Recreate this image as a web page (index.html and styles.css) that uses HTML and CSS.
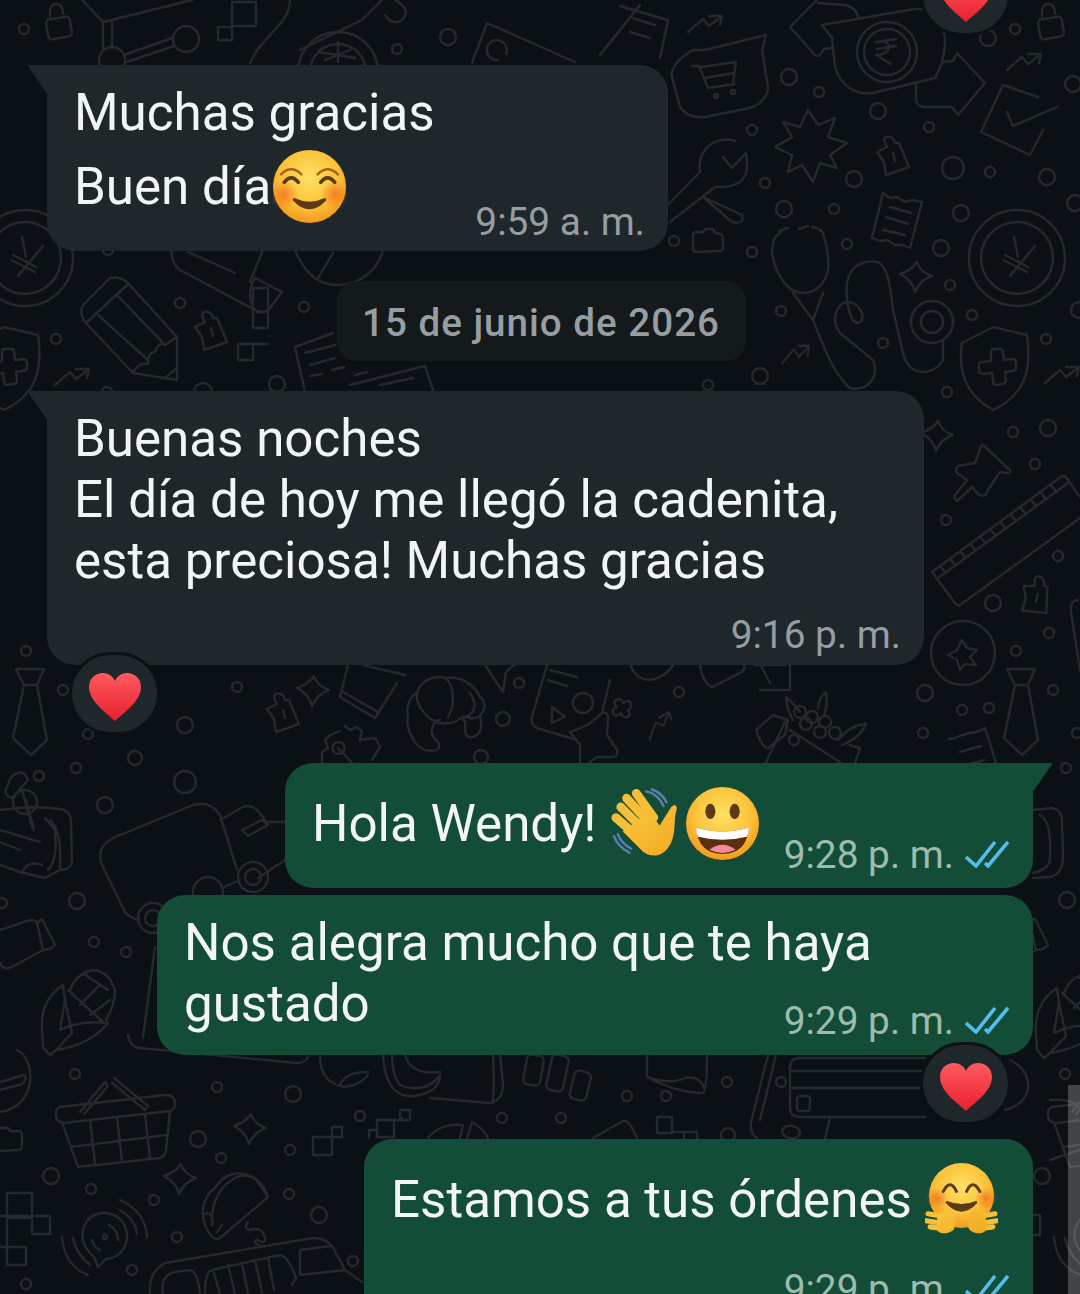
FILE: index.html
```html
<!DOCTYPE html>
<html lang="es">
<head>
    <meta charset="UTF-8">
    <title>Chat</title>
    <link rel="stylesheet" href="styles.css">
</head>
<body>
    <svg class="wallpaper" xmlns="http://www.w3.org/2000/svg" viewBox="0 0 1080 1294" width="1080" height="1294">
        <defs>
            <radialGradient id="face" cx="50%" cy="38%" r="62%">
                <stop offset="0" stop-color="#fde163"/>
                <stop offset="0.6" stop-color="#fcc43c"/>
                <stop offset="1" stop-color="#f59a1d"/>
            </radialGradient>
            <linearGradient id="red" x1="0" y1="0" x2="0" y2="1">
                <stop offset="0" stop-color="#ff5a5f"/>
                <stop offset="1" stop-color="#e8202c"/>
            </linearGradient>
            <linearGradient id="palm" x1="0" y1="0" x2="1" y2="1">
                <stop offset="0" stop-color="#f9c83f"/>
                <stop offset="1" stop-color="#f3a921"/>
            </linearGradient>
            <radialGradient id="blush">
                <stop offset="0" stop-color="#f2691c" stop-opacity="0.75"/>
                <stop offset="1" stop-color="#f2691c" stop-opacity="0"/>
            </radialGradient>
            <symbol id="heart" viewBox="0 0 54 50">
                <path d="M27 49 C20 42 1 30 1 15 C1 6 8 1 15 1 C20 1 25 4 27 9 C29 4 34 1 39 1 C46 1 53 6 53 15 C53 30 34 42 27 49Z" fill="url(#red)"/>
            </symbol>
            <g id="star4"><path d="M1 -14 Q4 -4 16 0 Q4 4 -1 16 Q-4 4 -16 -2 Q-4 -6 1 -14Z"/></g>
            <g id="plug"><path d="M-15 -3 L-5 -8 Q-10 -16 -6 -18 Q1 -20 3 -12 L7 -12 L17 12 L-6 20 L-8 7Z M1 -2 L3 6"/></g>
            <g id="trend"><path d="M0 15 L15 2 L21 9 L33 0 M21 -1 L34 -1 L32 8"/></g>
            <g id="tie"><path d="M1007 669 L1035 669 L1028 685 L1038 740 L1022 755 L1004 738 L1015 685Z M1015 685 L1028 685"/></g>
            <g id="shield"><path d="M962 343 L993 327 L1027 335 C1032 370 1025 395 993 410 C965 395 958 370 962 343Z M991 352 Q991 349 994 349 L1000 349 Q1003 349 1003 352 L1004 360 L1012 359 Q1016 359 1016 363 L1016 368 Q1016 371 1012 371 L1005 372 L1006 380 Q1006 384 1002 384 L997 385 Q993 385 993 381 L992 373 L984 374 Q979 374 979 370 L979 366 Q979 362 983 362 L991 361Z"/></g>
            <g id="yen"><circle cx="1017" cy="258" r="48"/><circle cx="1017" cy="258" r="36"/><path d="M1035 246 L1010 276 M1014 237 L1018 257 M1005 255 L1028 267 M1003 260 L1027 272"/></g>
            <g id="lock"><rect x="47" y="18" width="24" height="20" rx="4" transform="rotate(-10 59 28)"/><path d="M50 17 Q49 4 56 4 Q63 4 63 14"/></g>
            <g id="basket"><path d="M60 1107 L165 1095 Q175 1095 175 1103 Q175 1110 170 1111 L64 1123 Q55 1122 56 1114 Q56 1108 60 1107Z M63 1125 L78 1167 L160 1158 Q165 1157 166 1150 L170 1112 M90 1120 L95 1164 M117 1117 L122 1161 M145 1114 L150 1158 M71 1147 L167 1135 M80 1112 L105 1082 L108 1086 L84 1114 M114 1078 L148 1106 L145 1110 L112 1083"/></g>
            <g id="corn"><path d="M43 1047 L50 1055 L56 1050 Q90 1045 108 1023 Q80 1020 60 1030 L65 1000 L63 985 Q40 1000 42 1030 L43 1047 M56 1050 L72 1033 L65 1000 M70 990 Q75 975 92 970 Q108 970 115 990 Q115 1005 106 1020 M68 990 L103 1022 M84 974 L108 990 M80 1005 L100 985 M90 1015 L110 1000"/></g>
            <g id="bottle"><path d="M0 930 L30 920 Q36 920 37 923 L43 950 L10 968 Q2 970 0 962 M37 923 L42 919 L55 945 L50 949 L43 950"/></g>
            <g id="dial"><path d="M105 1213 C85 1213 81 1230 83 1240 C86 1252 92 1254 94 1257 L98 1267 L106 1259 C120 1258 128 1246 127 1234 C125 1222 118 1214 105 1213Z M109 1225 Q118 1230 118 1240 M92 1240 Q94 1247 100 1250 M62 1237 Q64 1265 88 1275 M73 1238 Q76 1254 90 1265 M120 1200 Q146 1212 147 1237 M120 1210 Q136 1220 137 1234"/><circle cx="105" cy="1237" r="2"/></g>
        </defs>
        <g class="doodle">
            <!-- small circles -->
            <circle cx="24" cy="29" r="5"/><circle cx="448" cy="37" r="8"/><circle cx="397" cy="49" r="5"/><circle cx="789" cy="77" r="8"/><circle cx="819" cy="92" r="5"/><circle cx="878" cy="111" r="8"/><circle cx="929" cy="127" r="5"/><circle cx="752" cy="130" r="5"/><circle cx="953" cy="168" r="11"/><circle cx="990" cy="172" r="5"/><circle cx="1047" cy="177" r="8"/><circle cx="854" cy="179" r="8"/><circle cx="765" cy="183" r="5"/><circle cx="784" cy="209" r="8"/><circle cx="834" cy="209" r="5"/><circle cx="961" cy="213" r="8"/><circle cx="674" cy="241" r="5"/><circle cx="752" cy="252" r="5"/><circle cx="847" cy="244" r="5"/><circle cx="941" cy="248" r="8"/><circle cx="950" cy="285" r="5"/><circle cx="972" cy="315" r="5"/><circle cx="781" cy="311" r="5"/><circle cx="883" cy="343" r="5"/><circle cx="1046" cy="339" r="5"/><circle cx="760" cy="376" r="8"/><circle cx="708" cy="385" r="5"/><circle cx="947" cy="392" r="5"/><circle cx="1015" cy="29" r="5"/><circle cx="1073" cy="84" r="8"/><circle cx="988" cy="38" r="8"/><circle cx="1075" cy="203" r="8"/><circle cx="1079" cy="310" r="8"/>
            <circle cx="180" cy="303" r="5"/><circle cx="56" cy="339" r="5"/><circle cx="304" cy="307" r="5"/><circle cx="277" cy="384" r="8"/><circle cx="203" cy="392" r="9"/><circle cx="108" cy="250" r="5"/><circle cx="107" cy="392" r="5"/>
            <circle cx="1048" cy="428" r="8"/><circle cx="1013" cy="432" r="5"/><circle cx="1035" cy="464" r="5"/><circle cx="946" cy="520" r="5"/><circle cx="1058" cy="556" r="5"/><circle cx="993" cy="603" r="8"/><circle cx="1049" cy="633" r="5"/><circle cx="1016" cy="651" r="5"/><circle cx="925" cy="693" r="8"/><circle cx="962" cy="710" r="5"/><circle cx="989" cy="708" r="5"/><circle cx="1053" cy="690" r="5"/><circle cx="923" cy="733" r="5"/><circle cx="1077" cy="733" r="5"/>
            <circle cx="26" cy="651" r="5"/><circle cx="63" cy="690" r="5"/><circle cx="88" cy="734" r="5"/><circle cx="185" cy="725" r="8"/><circle cx="237" cy="687" r="5"/><circle cx="76" cy="768" r="5"/><circle cx="39" cy="776" r="5"/><circle cx="185" cy="782" r="11"/><circle cx="105" cy="805" r="8"/><circle cx="135" cy="758" r="7"/>
            <circle cx="519" cy="683" r="5"/><circle cx="503" cy="719" r="7"/><circle cx="679" cy="692" r="5"/><circle cx="794" cy="740" r="5"/><circle cx="481" cy="757" r="7"/>
            <circle cx="77" cy="901" r="8"/><circle cx="94" cy="942" r="5"/><circle cx="126" cy="952" r="5"/><circle cx="2" cy="903" r="5"/>
            <circle cx="75" cy="1074" r="5"/><circle cx="217" cy="1087" r="5"/><circle cx="293" cy="1094" r="8"/><circle cx="360" cy="1116" r="5"/><circle cx="198" cy="1139" r="8"/><circle cx="290" cy="1150" r="5"/><circle cx="221" cy="1158" r="5"/><circle cx="51" cy="1176" r="8"/><circle cx="91" cy="1189" r="5"/><circle cx="154" cy="1200" r="5"/><circle cx="289" cy="1194" r="5"/><circle cx="319" cy="1215" r="8"/><circle cx="177" cy="1237" r="5"/><circle cx="132" cy="1270" r="5"/><circle cx="353" cy="1261" r="5"/><circle cx="26" cy="1284" r="5"/>
            <circle cx="502" cy="1118" r="5"/><circle cx="561" cy="1118" r="5"/><circle cx="627" cy="1096" r="5"/><circle cx="727" cy="1082" r="5"/><circle cx="728" cy="1135" r="7"/><circle cx="1066" cy="768" r="5"/><circle cx="1067" cy="900" r="8"/><circle cx="1065" cy="1074" r="5"/><circle cx="781" cy="1082" r="5"/><circle cx="666" cy="1096" r="5"/><circle cx="1042" cy="1176" r="8"/>

            <!-- top row -->
            <use href="#lock"/>
            <use href="#lock" x="992"/>
            <path d="M82 0 L103 22 L192 0 M103 22 L103 48 M112 22 L112 48 M124 55 L172 38 M127 62 L174 46"/>
            <circle cx="186" cy="39" r="13"/><circle cx="112" cy="60" r="13"/>
            <path d="M218 27 h14 v13 h-14Z M232 2 h24 v24 h-24Z M290 0 C290 25 262 35 250 63"/>
            <circle cx="338" cy="72" r="40"/><circle cx="338" cy="72" r="28"/>
            <path d="M338 42 L338 62 M318 52 L355 58 M325 60 L350 50 M300 50 L362 20 L382 0 M385 15 Q392 26 402 20 Q412 10 395 0"/>
            <path d="M472 63 L487 23 L548 50 L575 62 M498 60 a10 10 0 1 1 8 -6"/>
            <path d="M620 6 L668 20 L660 58 M632 18 L655 25 M630 32 L650 38 M600 55 L640 5"/>
            <use href="#trend" x="688" y="17"/>
            <path d="M766 35 L705 50 L693 50 C678 58 670 70 672 77 L680 107 C685 115 695 118 705 117 L750 108 C762 104 768 95 768 87 L762 50 Z M692 66 L699 66 L708 88 L735 84 M701 67 L736 62 L733 84 M705 78 L734 73"/>
            <circle cx="716" cy="96" r="2"/><circle cx="733" cy="92" r="2"/>
            <path d="M817 0 L790 27 L815 55 Q820 58 822 52 L824 49 L833 48 M818 3 L845 5 Q857 8 858 17"/>
            <path d="M822 25 L915 9 Q935 8 941 20 C948 40 945 60 935 78 L873 93 C860 95 842 90 835 67 L832 38Z"/>
            <circle cx="887" cy="52" r="30"/><circle cx="887" cy="52" r="23"/>
            <path d="M876 42 L896 39 M877 49 L896 46 M882 41 C892 42 892 54 876 55 L891 64"/>
            <path d="M943 62 L953 61 L957 53 L985 83 L958 115 L952 107 L923 107 Q916 105 916 100 L916 85"/>
            <use href="#trend" x="1007" y="55"/>
            <path d="M1038 97 L1003 85 L981 132 L1030 155 L1043 130 M1007 112 L1013 126 L1057 107"/>
            <path d="M808 110 L818 125 L835 118 L828 137 L847 143 L830 155 L837 168 L820 163 L813 182 L802 165 L788 172 L792 155 L775 147 L792 137 L783 122 L800 127Z"/>
            <use href="#plug" x="892" y="155"/>
            <path d="M735 141 C715 135 697 150 700 172 L668 205 M723 157 L732 168 L746 153 C750 175 745 188 715 187 L670 222 M703 197 L742 215 Q745 225 732 222 L703 197"/>
            <path d="M696 232 L703 232 L705 229 L713 229 L715 233 L720 234 Q723 234 723 240 L723 248 Q723 251 720 251 L696 252 Q693 252 693 249 L693 236 Q693 232 696 232Z"/>
            <path d="M883 193 L890 198 L897 197 L905 202 L912 200 L922 202 L910 248 L902 245 L895 245 L887 240 L880 241 L872 238Z M890 207 L911 213 M886 217 L908 224 M883 230 L905 235"/>
            <path d="M780 233 Q772 237 772 253 C777 280 790 293 803 293 C815 293 825 285 828 270 C830 258 825 240 823 233 Q820 228 812 227"/>
            <path d="M779 231 L788 228 M799 229 L808 226 M793 293 L813 320 L823 293 M813 320 C825 350 833 373 850 388 C867 392 880 377 873 360 L840 333 C830 320 837 302 848 302 C860 302 868 320 858 323 C850 323 845 300 847 283 C850 263 867 260 877 262 C887 265 890 283 893 310 L903 353 C908 377 933 377 943 360 L943 340"/>
            <circle cx="932" cy="322" r="21"/><circle cx="932" cy="322" r="11"/>
            <use href="#star4" x="916" y="276"/>
            <use href="#yen"/>
            <use href="#yen" x="-992"/>
            <use href="#shield"/>
            <use href="#shield" x="-989"/>
            <use href="#trend" transform="translate(782 347) scale(0.8 1.1)"/>
            <use href="#trend" x="1045" y="368"/>
            <use href="#trend" x="55" y="370"/>

            <!-- date row, left side -->
            <path d="M110 278 Q120 276 128 283 L177 337 L177 380 L133 373 L85 322 Q78 312 84 304Z M87 322 L127 285 M98 315 L148 360 M117 295 L165 345 M133 372 Q140 362 148 364 Q148 352 155 352 Q160 340 165 345 L177 337 M165 378 L177 368"/>
            <path d="M172 251 Q170 262 180 270 L255 310 Q265 315 270 308 L282 292 L255 278 Q245 295 255 310 M188 252 L235 273 M263 250 L250 282"/>
            <path d="M295 250 C305 275 320 285 337 285 C360 285 378 270 383 250 M333 253 L318 278"/>
            <use href="#plug" x="210" y="330"/>
            <path d="M253 328 h15 v-16 h-11 M253 328 v-40 h15 v40 M238 360 h15 v-16 h-15Z M253 344 L268 344"/>
            <path d="M295 347 L333 333 M295 347 L305 392 M305 353 L335 345 M310 365 L335 358 M350 385 L425 366 L433 390 M380 385 L413 378 M310 376 L322 374 M332 370 L344 367 M355 375 L367 372"/>

            <!-- right edge -->
            <use href="#star4" x="937" y="435"/>
            <path d="M983 445 L1010 470 Q1011 474 1007 473 L1000 472 L988 490 Q985 499 978 494 L972 487 L957 501 Q953 498 955 495 L967 480 L960 475 Q953 472 958 466 L975 463 L980 450 Q980 445 983 445Z"/>
            <path d="M932 572 L1062 476 Q1066 476 1068 480 L1080 497 M1080 518 L960 605 Q957 606 955 603 L932 572 M938 578 L1068 483 M945 572 L941 567 M955 565 L951 560 M965 557 L961 552 M975 550 L971 545 M985 543 L981 538 M995 535 L991 530 M1005 528 L1001 523 M1015 520 L1011 515 M1025 513 L1021 508 M1035 505 L1031 500 M1045 498 L1041 493 M1055 490 L1051 485"/>
            <use href="#plug" transform="translate(1036 595) rotate(25)"/>
            <circle cx="963" cy="653" r="32"/>
            <path d="M962 640 L967 648 L977 650 L970 657 L976 665 L965 664 L960 670 L957 660 L948 655 L957 650Z"/>
            <use href="#tie"/>
            <use href="#tie" x="-991"/>
            <path d="M1078 600 Q1070 600 1071 612 L1080 670"/>
            <path d="M949 739 L955 738 L962 735 L970 733 L977 732 L985 728 L996 763 M960 752 L981 746 M964 766 L984 760"/>

            <!-- row under second bubble -->
            <use href="#plug" x="282" y="712"/>
            <use href="#star4" x="313" y="690"/>
            <path d="M348 665 L340 697 L375 718 L397 683 M343 692 L378 712 M363 665 L405 675"/>
            <path d="M345 726 L350 730 L357 727 L362 732 L360 740 L375 738 L380 747 L372 760 M322 763 L322 752 L328 748 L325 740 L330 735 L340 731"/>
            <path d="M338 748 L352 763 M334 752 a6 6 0 1 0 9 -8 a6 6 0 1 0 -9 8"/>
            <path d="M417 693 C420 680 435 675 445 678 C460 675 475 685 480 697 C490 705 482 720 470 718 C465 715 460 718 458 720 C455 723 440 725 435 722 C430 730 430 735 438 742 C442 750 435 752 425 750 C412 745 405 725 408 715 C405 705 412 695 417 693 M417 693 C415 705 430 725 440 720 M445 678 C455 685 455 705 448 717 M470 693 C478 705 475 715 462 718 M462 718 C470 722 460 735 470 737 C480 737 483 730 480 715"/>
            <path d="M485 665 L503 692 L506 672 L520 660 M547 665 L532 717 Q530 726 540 729 L577 740 M610 680 L602 713 M550 670 L577 677 M548 680 L567 686"/>
            <path d="M552 707 L565 717 L552 723Z"/>
            <circle cx="583" cy="703" r="10"/>
            <path d="M570 732 L588 725 L602 713 Q608 712 608 717 L607 735 L617 750 Q618 757 613 757 L597 757 L590 762 M580 763 L580 745 L570 732"/>
            <path d="M616 700 Q622 697 623 703 Q630 698 631 705 Q632 708 628 710 Q632 715 627 717 Q622 718 621 713 Q615 718 613 713 Q612 708 617 707 Q612 702 616 700Z"/>
            <path d="M630 663 C635 685 660 685 673 665 M700 666 Q703 683 712 687 L740 673 Q748 668 742 660"/>
            <use href="#trend" transform="translate(643 728) rotate(-30) scale(0.9)"/>
            <path d="M756 730 L773 715 L788 720 L785 735 L768 748 Q762 748 756 730Z M785 722 L760 775 M790 730 L860 775 M850 745 L860 748 L855 763"/>
            <circle cx="800" cy="712" r="6"/><circle cx="812" cy="717" r="6"/><circle cx="825" cy="722" r="6"/><circle cx="806" cy="724" r="6"/><circle cx="820" cy="732" r="6"/><circle cx="835" cy="733" r="6"/>
            <path d="M793 720 Q786 708 786 697 Q795 705 800 712 M818 708 Q820 695 826 692 Q828 705 824 716 M838 740 Q850 725 866 724 Q860 738 842 745"/>
            <path d="M758 660 L770 683 M755 665 L785 665 M760 690 L790 690 L790 662"/>

            <!-- left middle -->
            <path d="M0 810 Q30 805 60 809 Q70 810 71 820 L72 862 Q70 870 60 870 L45 878 L20 872 L0 865 M45 818 L55 830 Q58 860 48 870 M0 830 L40 842 M0 842 L20 850 M50 820 Q62 830 60 868 M22 872 Q28 860 42 865"/>
            <path d="M12 798 L28 780 Q24 770 18 773 Q10 775 8 785 Q2 795 12 798 M22 790 L32 827 M26 800 L34 830"/>
            <circle cx="25" cy="802" r="12"/>
            <path d="M193 805 L113 838 Q95 848 102 865 L125 912 Q130 918 139 920 M193 805 Q210 800 220 815 L237 870 M220 820 L243 807 Q255 802 266 822 L285 822 M242 830 L262 820 L268 825 L248 836Z M258 878 L285 860 M222 888 L240 880"/>
            <circle cx="253" cy="877" r="15"/><circle cx="253" cy="877" r="8"/><circle cx="208" cy="892" r="15"/><circle cx="153" cy="918" r="15"/><circle cx="153" cy="918" r="8"/>
            <use href="#bottle"/>
            <use href="#bottle" x="993"/>
            <use href="#corn"/>
            <use href="#corn" transform="translate(994 3)"/>
            <path d="M155 947 L143 1037 M128 1035 Q130 1047 140 1048 L297 1063 Q305 1063 308 1057"/>
            <path d="M1033 810 L1052 808 Q1062 810 1062 820 L1063 858 Q1062 875 1050 877 L1033 878 M1040 815 Q1052 820 1050 860 Q1048 870 1033 873"/>

            <!-- bottom row -->
            <path d="M0 1112 C37 1107 37 1060 17 1050 M0 1090 L22 1084 Q28 1078 24 1075 L0 1082"/>
            <path d="M0 1128 h8 l2 3 h8 q4 0 4 5 v10 q0 4 -4 4 l-18 1"/>
            <use href="#basket"/>
            <use href="#basket" x="992"/>
            <use href="#star4" x="250" y="1128"/>
            <use href="#star4" x="180" y="1178"/>
            <path d="M7 1193 h25 v25 h-25Z M32 1216 h18 v18 h-18Z M0 1216 h32 M7 1218 v29 M7 1247 h19 v18 h-19Z M0 1247 h7"/>
            <use href="#dial"/>
            <use href="#dial" x="992"/>
            <path d="M313 1137 h19 v18 h-19Z M332 1127 h10 v10 h-10Z"/>
            <path d="M212 1237 C195 1215 205 1195 215 1188 C225 1172 240 1170 255 1178 L268 1197 L220 1238 Q215 1240 212 1237Z M268 1197 C262 1178 245 1170 232 1180 C222 1185 212 1200 212 1220 M204 1215 C208 1210 214 1215 212 1225 M217 1232 L222 1225"/>
            <path d="M248 1222 Q243 1228 250 1230 Q262 1226 265 1238 Q266 1245 258 1240 Q252 1240 258 1245 L262 1246"/>
            <path d="M150 1294 Q148 1272 165 1263 L313 1238 Q325 1238 332 1246 L345 1270 L362 1282 M163 1294 Q160 1275 175 1272 L190 1270 Q198 1272 200 1294 M205 1294 Q205 1272 212 1270 L280 1255 Q288 1256 296 1278 L292 1285 M213 1270 L220 1294 M228 1265 L235 1294 M242 1263 L248 1294 M255 1260 L262 1292 M268 1258 L274 1290 M300 1250 L330 1246 M300 1250 L300 1275 L345 1270"/>
            <path d="M320 1057 C320 1075 330 1085 345 1087 Q360 1085 368 1075 M340 1085 Q345 1072 368 1072"/>
            <path d="M383 1055 C385 1090 400 1100 420 1095 Q440 1090 440 1075 Q425 1095 400 1085 Q392 1075 392 1055 M405 1055 Q410 1075 440 1072 M430 1098 L490 1103 Q503 1100 503 1085 L500 1055 M492 1103 Q495 1095 493 1055"/>
            <rect x="525" y="1055" width="17" height="30" rx="5" transform="rotate(10 533 1070)"/>
            <rect x="549" y="1055" width="17" height="36" rx="5" transform="rotate(12 557 1073)"/>
            <rect x="572" y="1071" width="17" height="29" rx="5" transform="rotate(14 580 1085)"/>
            <path d="M647 1055 L647 1077 Q677 1093 703 1093 Q707 1090 707 1055 M647 1077 Q670 1085 685 1078 Q700 1075 704 1088"/>
            <path d="M768 1055 L751 1122 Q750 1135 757 1138 M776 1055 L760 1120"/>
            <path d="M925 1058 L800 1058 Q790 1058 790 1068 L790 1108 Q790 1117 800 1117 L925 1117 M790 1071 L922 1071 M790 1088 L922 1088 M830 1118 L825 1138"/>
            <rect x="797" y="1096" width="13" height="15" rx="3"/>
            <ellipse cx="791" cy="1132" rx="9" ry="6" transform="rotate(8 791 1132)"/>
            <path d="M657 1117 h15 v16 h-15Z M672 1132 h25 v8 M684 1132 v8"/>
            <path d="M593 1138 L623 1121 Q628 1120 632 1128 L637 1138 M428 1138 Q440 1123 463 1125 L460 1138 M467 1138 L472 1122 Q483 1128 488 1138"/>
            <path d="M377 1120 h17 v17 h-17Z M400 1110 h10 v10 h-10Z M394 1120 h8 v-2 M369 1138 v-8 h8"/>
            <path d="M1050 1100 Q1072 1098 1080 1108 M1050 1160 L1080 1150"/>
            <path d="M1033 1215 h7 v20 h-7"/>
            <path d="M1010 1060 Q1030 1070 1028 1090 Q1024 1105 1005 1110"/>
        </g>
    </svg>

    <div class="scrollbar"></div>

    <main class="chat">
        <div class="reaction reaction-top">
            <svg class="heart"><use href="#heart"/></svg>
        </div>

        <div class="msg msg-in msg-thanks">
            <div class="line">Muchas gracias</div>
            <div class="line line-next">Buen día
                <svg class="emoji emoji-tight" viewBox="0 0 72 72">
                    <circle cx="36" cy="36" r="36" fill="url(#face)"/>
                    <circle cx="11" cy="44" r="14" fill="url(#blush)"/>
                    <circle cx="61" cy="44" r="14" fill="url(#blush)"/>
                    <path d="M8 24 Q18 14 28 24 M44 24 Q54 14 64 24" fill="none" stroke="#a3651c" stroke-width="2.5" stroke-linecap="round"/>
                    <path d="M11 32 Q18 23 25 32 M47 32 Q54 23 61 32" fill="none" stroke="#5c3a16" stroke-width="3.5" stroke-linecap="round"/>
                    <path d="M21 49 Q36 65 51 49 Q36 56 21 49Z" fill="#5c3a16" stroke="#5c3a16" stroke-width="3" stroke-linejoin="round"/>
                </svg>
            </div>
            <div class="meta meta-overlap-1"><span>9:59 a. m.</span></div>
        </div>

        <div class="date-row">
            <div class="date-pill">15 de junio de 2026</div>
        </div>

        <div class="msg msg-in msg-tall">
            <div class="line">Buenas noches</div>
            <div class="line">El día de hoy me llegó la cadenita,</div>
            <div class="line">esta preciosa! Muchas gracias</div>
            <div class="meta meta-below"><span>9:16 p. m.</span></div>
            <div class="reaction reaction-left">
                <svg class="heart"><use href="#heart"/></svg>
            </div>
        </div>

        <div class="msg msg-out msg-hello">
            <div class="line">Hola Wendy!
                <svg class="emoji emoji-wave" viewBox="0 0 72 72">
                    <path d="M36 3 Q48 5 54 18 M42 1 Q52 4 57 14 M3 49 Q7 60 19 66 M7 47 Q10 56 21 62" fill="none" stroke="#5b7fb5" stroke-width="2.5" stroke-linecap="round"/>
                    <path d="M5 30 L28 50 M10 19 L33 42 M16 10 L39 35 M26 5 L44 30" fill="none" stroke="#f7bf37" stroke-width="9" stroke-linecap="round"/>
                    <path d="M62 19 C66 15 69 18 67 24 C64 34 68 50 58 62 C50 72 38 70 32 64 L12 44 L40 24 L50 38 Z" fill="url(#palm)"/>
                </svg>
                <svg class="emoji emoji-grin" viewBox="0 0 72 72">
                    <circle cx="36" cy="36" r="36" fill="url(#face)"/>
                    <ellipse cx="24" cy="24" rx="5" ry="7.5" fill="#5c3a16"/>
                    <ellipse cx="48" cy="24" rx="5" ry="7.5" fill="#5c3a16"/>
                    <path d="M10 40 Q36 48 62 40 Q60 66 36 66 Q12 66 10 40Z" fill="#5c2d0e"/>
                    <path d="M10 40 Q36 48 62 40 Q62 46 60 49 Q36 55 12 49 Q10 46 10 40Z" fill="#fff"/>
                    <path d="M23 62 Q36 52 49 62 Q36 68 23 62Z" fill="#f28a9b"/>
                </svg>
            </div>
            <div class="meta meta-overlap-3">
                <span>9:28 p. m.</span>
                <svg class="ticks" viewBox="0 0 44 28"><path d="M1 17 L11 26 L30 2 M20 23 L23 26 L43 2"/></svg>
            </div>
        </div>

        <div class="msg msg-out msg-glad">
            <div class="line">Nos alegra mucho que te haya</div>
            <div class="line">gustado</div>
            <div class="meta meta-overlap-4">
                <span>9:29 p. m.</span>
                <svg class="ticks" viewBox="0 0 44 28"><path d="M1 17 L11 26 L30 2 M20 23 L23 26 L43 2"/></svg>
            </div>
            <div class="reaction reaction-right">
                <svg class="heart"><use href="#heart"/></svg>
            </div>
        </div>

        <div class="msg msg-out msg-orders">
            <div class="line">Estamos a tus órdenes
                <svg class="emoji emoji-hug" viewBox="0 0 72 72">
                    <circle cx="36" cy="32" r="32" fill="url(#face)"/>
                    <circle cx="12" cy="35" r="11" fill="url(#blush)"/>
                    <circle cx="60" cy="35" r="11" fill="url(#blush)"/>
                    <path d="M18 28 Q25 15 31 28 M41 28 Q47 15 54 28" fill="none" stroke="#5c3a16" stroke-width="3" stroke-linecap="round"/>
                    <path d="M22 39 Q36 54 50 39 Q36 45 22 39Z" fill="#5c3a16" stroke="#5c3a16" stroke-width="3" stroke-linejoin="round"/>
                    <path d="M3 50 L20 53 M1 57 L20 60 M5 63 L20 65 M69 50 L52 53 M71 57 L52 60 M67 63 L52 65" stroke="#f7bf37" stroke-width="5" stroke-linecap="round"/>
                    <path d="M23 44 C30 52 32 60 28 66 C22 71 14 70 12 66 L12 52 Z M49 44 C42 52 40 60 44 66 C50 71 58 70 60 66 L60 52 Z" fill="url(#palm)"/>
                </svg>
            </div>
            <div class="meta meta-overlap-5">
                <span>9:29 p. m.</span>
                <svg class="ticks" viewBox="0 0 44 28"><path d="M1 17 L11 26 L30 2 M20 23 L23 26 L43 2"/></svg>
            </div>
        </div>
    </main>
</body>
</html>
```

FILE: styles.css
```css
html, body {
    margin: 0;
    padding: 0;
    height: 1294px;
    overflow: hidden;
    background: #0b1014;
}

body {
    position: relative;
    width: 1080px;
    font-family: Roboto, "Liberation Sans", sans-serif;
}

.wallpaper {
    position: absolute;
    top: 0;
    left: 0;
}

.doodle {
    fill: none;
    stroke: #24292d;
    stroke-width: 2.4;
    stroke-linecap: round;
    stroke-linejoin: round;
}

.scrollbar {
    position: absolute;
    top: 1085px;
    right: 0;
    width: 12px;
    height: 209px;
    background: rgba(255, 255, 255, 0.22);
    z-index: 2;
}

.chat {
    position: relative;
    display: flex;
    flex-direction: column;
    padding-top: 65px;
}

.msg {
    position: relative;
    box-sizing: border-box;
    padding: 17px 23px 10px 27px;
    border-radius: 28px;
    color: #f2f5f5;
    font-size: 51.1px;
}

.msg::before {
    content: "";
    position: absolute;
    top: 0;
    width: 21px;
    height: 30px;
}

.msg-in {
    align-self: flex-start;
    margin-left: 47px;
    background: #1f272a;
    border-top-left-radius: 0;
}

.msg-in::before {
    left: -20px;
    background: #1f272a;
    clip-path: polygon(0 0, 100% 0, 100% 100%);
}

.msg-out {
    align-self: flex-end;
    margin-right: 47px;
    padding-right: 24px;
    background: #144d37;
}

.msg-thanks {
    width: 621px;
    height: 186px;
}

.msg-tall {
    width: 877px;
    height: 274px;
}

.msg-hello {
    width: 748px;
    height: 125px;
    margin-top: 98px;
    padding-top: 30px;
    border-top-right-radius: 0;
}

.msg-hello::before {
    right: -20px;
    background: #144d37;
    clip-path: polygon(0 0, 100% 0, 0 100%);
}

.msg-glad {
    width: 876px;
    height: 160px;
    margin-top: 7px;
}

.msg-orders {
    width: 669px;
    height: 200px;
    margin-top: 84px;
    padding-top: 30px;
}

.line {
    display: flex;
    align-items: center;
    height: 61px;
}

.line-next {
    margin-top: 13px;
}

.meta {
    display: flex;
    justify-content: flex-end;
    align-items: center;
    gap: 11px;
    height: 40px;
    color: #969ea1;
    font-size: 38.8px;
}

.msg-out .meta {
    color: #9dbcae;
}

.meta-overlap-1 {
    margin-top: -16px;
}

.meta-below {
    margin-top: 23px;
}

.meta-overlap-3 {
    margin-top: -20px;
}

.meta-overlap-4 {
    margin-top: -34px;
}

.meta-overlap-5 {
    margin-top: 38px;
}

.ticks {
    width: 44px;
    height: 28px;
    fill: none;
    stroke: #53bdeb;
    stroke-width: 3.6;
}

.emoji {
    flex: none;
    width: 73px;
    height: 73px;
}

.emoji-tight {
    margin-left: 2px;
}

.emoji-wave {
    width: 70px;
    margin-left: 14px;
}

.emoji-grin {
    margin-left: 5px;
}

.emoji-hug {
    margin-left: 13px;
}

.date-row {
    display: flex;
    justify-content: center;
    margin: 30px 0;
    padding-left: 2px;
}

.date-pill {
    box-sizing: border-box;
    width: 409px;
    height: 80px;
    padding-top: 2px;
    line-height: 80px;
    text-align: center;
    border-radius: 20px;
    background: #14191c;
    color: #979ea2;
    font-size: 38.6px;
    font-weight: 500;
    letter-spacing: 1px;
}

.reaction {
    position: absolute;
    box-sizing: border-box;
    display: flex;
    justify-content: center;
    align-items: center;
    width: 91px;
    height: 83px;
    padding-top: 6px;
    border: 3px solid #0b1014;
    border-radius: 42px;
    background: #1f272a;
}

.reaction-left {
    top: calc(100% - 13px);
    left: 22px;
}

.reaction-right {
    top: calc(100% - 13px);
    right: 22px;
}

.reaction-top {
    top: -47px;
    left: 920px;
}

.heart {
    width: 54px;
    height: 50px;
}
```
